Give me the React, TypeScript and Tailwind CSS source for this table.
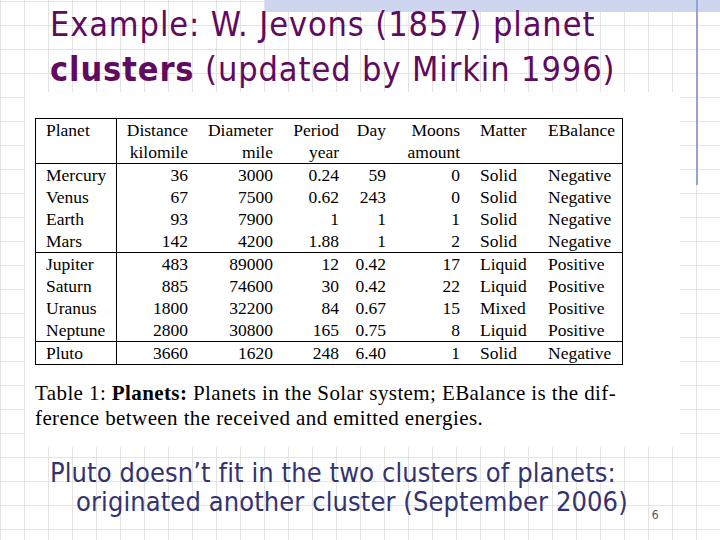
import React from 'react';

const rows = [
  ['Mercury', '36', '3000', '0.24', '59', '0', 'Solid', 'Negative'],
  ['Venus', '67', '7500', '0.62', '243', '0', 'Solid', 'Negative'],
  ['Earth', '93', '7900', '1', '1', '1', 'Solid', 'Negative'],
  ['Mars', '142', '4200', '1.88', '1', '2', 'Solid', 'Negative'],
  ['Jupiter', '483', '89000', '12', '0.42', '17', 'Liquid', 'Positive'],
  ['Saturn', '885', '74600', '30', '0.42', '22', 'Liquid', 'Positive'],
  ['Uranus', '1800', '32200', '84', '0.67', '15', 'Mixed', 'Positive'],
  ['Neptune', '2800', '30800', '165', '0.75', '8', 'Liquid', 'Positive'],
  ['Pluto', '3660', '1620', '248', '6.40', '1', 'Solid', 'Negative'],
];

const groups = [rows.slice(0, 4), rows.slice(4, 8), rows.slice(8)];

const cols = 'grid grid-cols-[81px_71px_85px_66px_47px_74px_88px_76px]';

function Row({ cells }: { cells: string[] }) {
  return (
    <div className={cols}>
      <div className="pl-[10px] border-r border-black">{cells[0]}</div>
      <div className="text-right">{cells[1]}</div>
      <div className="text-right">{cells[2]}</div>
      <div className="text-right">{cells[3]}</div>
      <div className="text-right">{cells[4]}</div>
      <div className="text-right">{cells[5]}</div>
      <div className="pl-[20px]">{cells[6]}</div>
      <div>{cells[7]}</div>
    </div>
  );
}

export default function App() {
  return (
    <div className="relative w-[720px] h-[540px] overflow-hidden bg-white bg-[linear-gradient(to_right,#e3e3e3_1px,transparent_1px),linear-gradient(to_bottom,#e3e3e3_1px,transparent_1px)] [background-size:24px_24px] [background-position:0_1px]">
      {/* slide template decoration */}
      <div className="absolute left-[265px] top-0 w-[455px] h-[12px] bg-[#cdd6ee]" />
      <div className="absolute left-[696px] top-0 w-[2px] h-[185px] bg-[#93a3d3]" />

      <div className="relative flex flex-col">
        <h1 className="pl-[50px] pt-[2px] text-[34px] leading-[45px] text-[#600a60] font-['DejaVu_Sans_Condensed','DejaVu_Sans',sans-serif] tracking-[0.9px]">
          <div>Example: W. Jevons (1857) planet</div>
          <div>
            <span className="font-bold">clusters</span> (updated by Mirkin 1996)
          </div>
        </h1>

        <div className="ml-[25px] w-[655px] h-[355px] bg-white pt-[26px] pl-[10px] font-['Liberation_Serif',serif] text-black">
          <div className="w-[588px] border border-black text-[17.5px] leading-[22px]">
            <div className="border-b border-black">
              <div className={cols}>
                <div className="pl-[10px] border-r border-black row-span-2">Planet</div>
                <div className="text-right">Distance</div>
                <div className="text-right">Diameter</div>
                <div className="text-right">Period</div>
                <div className="text-right">Day</div>
                <div className="text-right">Moons</div>
                <div className="pl-[20px]">Matter</div>
                <div>EBalance</div>
                <div className="text-right">kilomile</div>
                <div className="text-right">mile</div>
                <div className="text-right">year</div>
                <div />
                <div className="text-right">amount</div>
                <div />
                <div />
              </div>
            </div>
            {groups.map((g, i) => (
              <div key={i} className={i < groups.length - 1 ? 'border-b border-black' : ''}>
                {g.map((r) => (
                  <Row key={r[0]} cells={r} />
                ))}
              </div>
            ))}
          </div>

          <p className="mt-[16px] text-[21px] leading-[25px] tracking-[0.4px]">
            <span className="block">
              Table 1: <span className="font-bold">Planets:</span> Planets in the Solar system; EBalance is the dif-
            </span>
            <span className="block">ference between the received and emitted energies.</span>
          </p>
        </div>

        <div className="flex items-end mt-[11px] font-['DejaVu_Sans_Condensed','DejaVu_Sans',sans-serif] text-[#333370]">
          <p className="pl-[50px] text-[27px] leading-[29px] tracking-[0.1px]">
            <span className="block">Pluto doesn’t fit in the two clusters of planets:</span>
            <span className="block pl-[26px]">originated another cluster (September 2006)</span>
          </p>
          <span className="ml-[24px] mb-[-8px] text-[12px] text-[#555]">6</span>
        </div>
      </div>
    </div>
  );
}
